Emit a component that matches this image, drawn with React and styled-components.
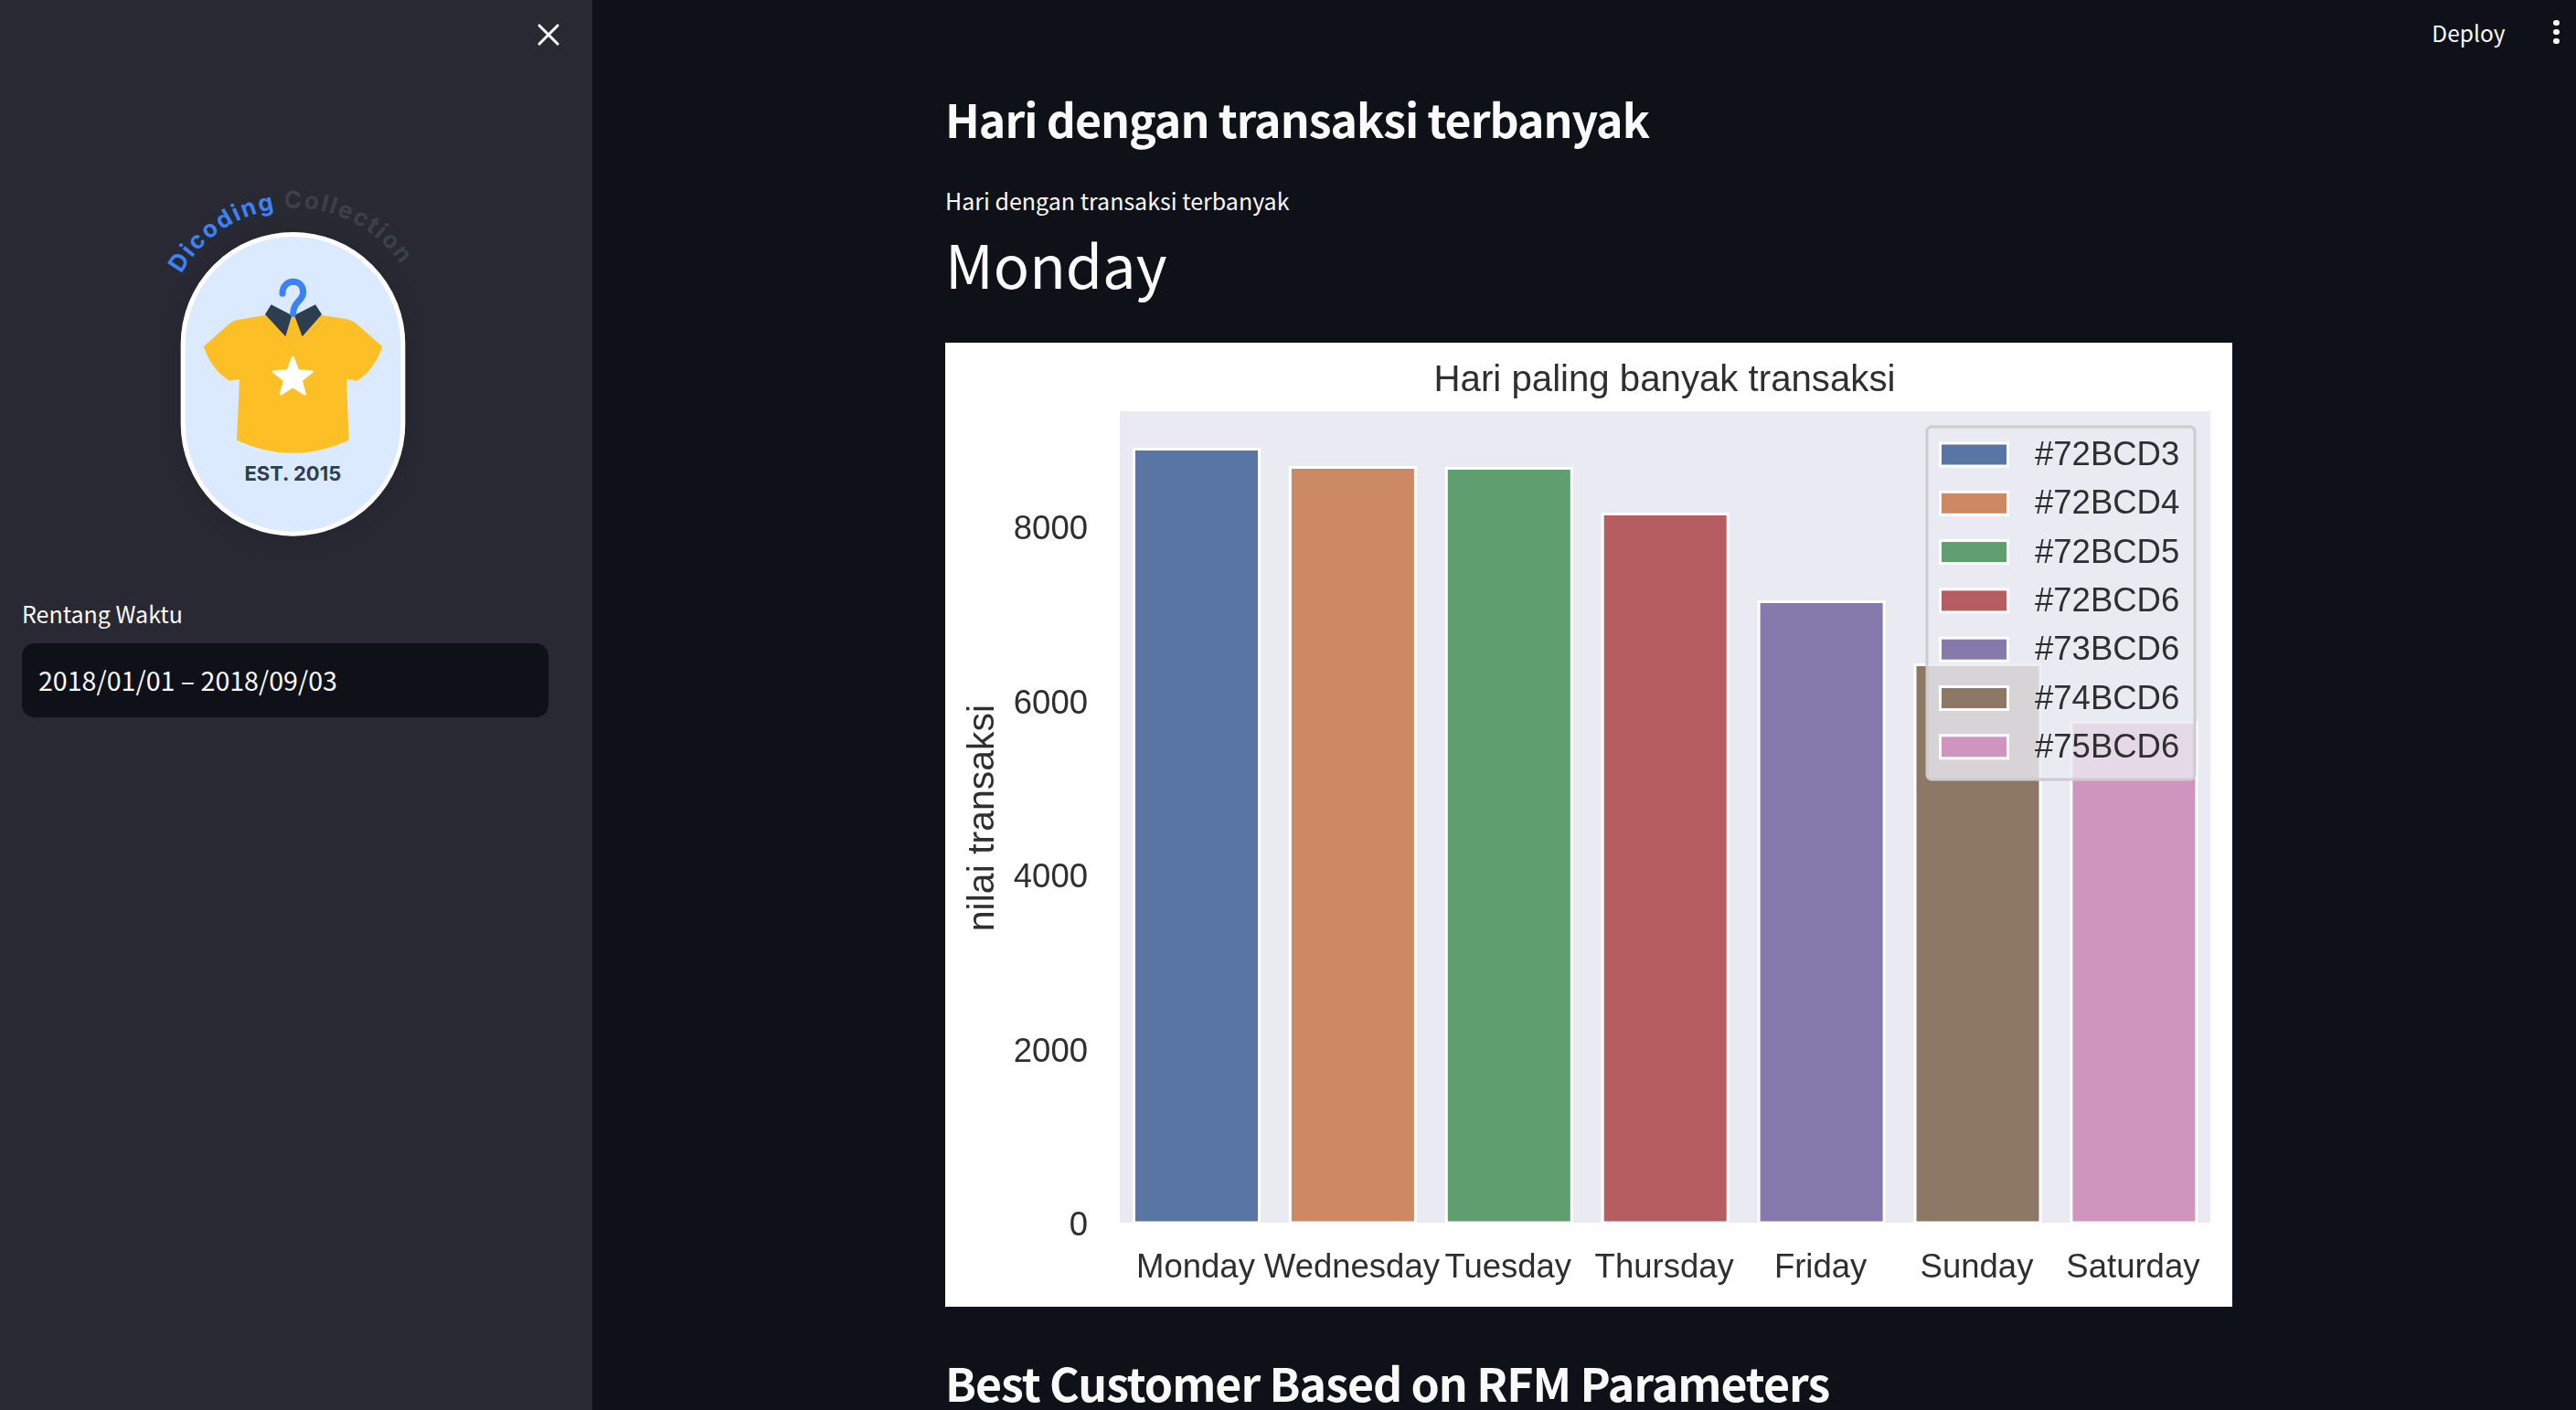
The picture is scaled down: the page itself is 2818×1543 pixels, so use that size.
import React from "react";
import styled, { createGlobalStyle } from "styled-components";
import { X } from "lucide-react";

const GlobalStyle = createGlobalStyle`
  html, body {
    margin: 0;
    height: 100%;
    overflow: hidden;
    background: #0e1117;
    font-family: "Noto Sans CJK SC", "Noto Sans", sans-serif;
    color: #fafafa;
  }
`;

const Page = styled.div`
  display: flex;
  height: 1543px;
  overflow: hidden;
`;

const Sidebar = styled.aside`
  flex: 0 0 648px;
  box-sizing: border-box;
  padding: 0 48px 0 24px;
  background: #282933;
`;

const CloseRow = styled.div`
  height: 76px;
  display: flex;
  align-items: center;
  justify-content: flex-end;
  margin-right: -20px;
`;

const LogoSvg = styled.svg`
  display: block;
  width: 350px;
  height: 440px;
  margin: 104px 0 0 126px;
`;

const Pill = styled.rect`
  fill: #dbeafe;
  stroke: #ffffff;
  stroke-width: 15;
  filter: drop-shadow(0 10px 30px rgba(0, 0, 0, 0.12));
`;

const FieldLabel = styled.div`
  margin-top: 33px;
  font-size: 25px;
  line-height: 36px;
`;

const DateInput = styled.div`
  margin-top: 15px;
  height: 81px;
  box-sizing: border-box;
  padding: 0 18px 3px;
  display: flex;
  align-items: center;
  border-radius: 14px;
  background: #0e1117;
  font-size: 28.6px;
`;

const Main = styled.main`
  flex: 1;
  min-width: 0;
  padding-left: 386px;
`;

const Toolbar = styled.div`
  height: 70px;
  margin-left: -386px;
  padding-right: 18px;
  display: flex;
  align-items: center;
  justify-content: flex-end;
  gap: 53px;
  font-size: 24.5px;
`;

const Dots = styled.div`
  display: flex;
  flex-direction: column;
  gap: 3.4px;

  span {
    width: 6.6px;
    height: 6.6px;
    border-radius: 50%;
    background: #fafafa;
  }
`;

const Heading = styled.h2`
  margin: ${({ $top }) => $top}px 0 0;
  font-size: 50px;
  letter-spacing: -1px;
  line-height: 62px;
  font-weight: 700;
  white-space: nowrap;
`;

const MetricLabel = styled.div`
  margin-top: 41px;
  font-size: 25px;
  line-height: 36px;
`;

const MetricValue = styled.div`
  margin-top: 11px;
  font-size: 65px;
  line-height: 80px;
`;

const Figure = styled.div`
  margin-top: 47px;
  width: 1408px;
  height: 1055px;
  background: #ffffff;
`;

const ChartSvg = styled.svg`
  display: block;
  width: 1408px;
  height: 1055px;
  filter: blur(0.4px);
`;

const ChartText = styled.text`
  font-family: "Liberation Sans", Arial, sans-serif;
  font-size: ${({ $size }) => $size || 36.5}px;
  fill: #2f2f2f;
  text-anchor: ${({ $anchor }) => $anchor || "start"};
`;

const Bar = styled.rect`
  stroke: #ffffff;
  stroke-width: 3;
`;

const bars = [
  { day: "Monday", top: 493, color: "#5975a4" },
  { day: "Wednesday", top: 513, color: "#cc8963" },
  { day: "Tuesday", top: 514, color: "#5f9e6e" },
  { day: "Thursday", top: 564, color: "#b55d60" },
  { day: "Friday", top: 660, color: "#857aab" },
  { day: "Sunday", top: 729, color: "#8d7866" },
  { day: "Saturday", top: 792, color: "#d095bf" },
];

const legend = ["#72BCD3", "#72BCD4", "#72BCD5", "#72BCD6", "#73BCD6", "#74BCD6", "#75BCD6"];
const yTicks = [8000, 6000, 4000, 2000, 0];

const ORIGIN_Y = 375;
const BASE_Y = 963;

const Chart = () => (
  <ChartSvg viewBox="0 0 1408 1055">
    <rect x="191" y="75" width="1193" height="888" fill="#eaeaf2" />
    <ChartText x="787" y="53" $size={40.2} $anchor="middle">Hari paling banyak transaksi</ChartText>
    {bars.map((b, i) => {
      const x = 208 + i * 170.9;
      const y = b.top - ORIGIN_Y;
      return (
        <g key={b.day}>
          <Bar x={x - 1.5} y={y - 1.5} width={137} height={BASE_Y - y + 1.5} fill={b.color} />
          <ChartText x={x + 66} y="1023" $anchor="middle">{b.day}</ChartText>
        </g>
      );
    })}
    {yTicks.map((t) => (
      <ChartText key={t} x="156" y={BASE_Y + 14 - (t / 1000) * 95.25} $anchor="end">{t}</ChartText>
    ))}
    <ChartText x="0" y="0" $size={41} $anchor="middle" transform="translate(53 520) rotate(-90)">nilai transaksi</ChartText>
    <rect x="1074" y="92" width="293" height="386" rx="5" fill="rgba(234,234,242,0.8)" stroke="#cccccc" strokeWidth="3" />
    {legend.map((label, i) => (
      <g key={label}>
        <Bar x={1088.5} y={110 + i * 53.3} width={74} height={25} fill={bars[i].color} />
        <ChartText x="1192" y={134 + i * 53.3}>{label}</ChartText>
      </g>
    ))}
  </ChartSvg>
);

const Logo = () => (
  <LogoSvg viewBox="0 0 1050 1320">
    <defs>
      <path id="logo-arc" d="M 145 360 A 424 424 0 0 1 885 360" />
    </defs>
    <text fontFamily="Inter, sans-serif" fontWeight="700" fontSize="78" letterSpacing="6.5">
      <textPath href="#logo-arc" startOffset="0">
        <tspan fill="#3b82f6">Dicoding</tspan>
        <tspan fill="#3d3f49"> Collection</tspan>
      </textPath>
    </text>
    <Pill x="150.5" y="229.5" width="722" height="983" rx="361" />
    <path
      d="M420 495 L330 510 Q315 513 300 525 L218 598 Q245 675 302 710 L336 704 L327 905 Q510 990 695 905 L687 704 L722 710 Q778 675 805 598 L722 525 Q708 513 690 508 L605 495 L512 495 Z"
      fill="#fdbf26"
    />
    <path d="M440 460 L508 495 L487 565 L420 492 Z M585 460 L516 495 L542 565 L606 492 Z" fill="#2c3e50" />
    <path
      d="M477 424 C477 397 495 385 512 385 C535 385 545 403 545 420 C545 447 512 450 512 490"
      fill="none"
      stroke="#3b82f6"
      strokeWidth="21"
      strokeLinecap="round"
    />
    <polygon
      points="511,634 527.5,677 574,680 537.6,708.7 550,753 511,728 472,753 484.4,708.7 448,680 494.5,677"
      fill="#fff"
      stroke="#fff"
      strokeWidth="9"
      strokeLinejoin="round"
    />
    <text x="511" y="1039" textAnchor="middle" fontFamily="Inter, sans-serif" fontWeight="700" fontSize="66" fill="#2c3e50">
      EST. 2015
    </text>
  </LogoSvg>
);

export default function App() {
  return (
    <>
      <GlobalStyle />
      <Page>
        <Sidebar>
          <CloseRow>
            <X size={40} strokeWidth={1.9} color="#fafafa" />
          </CloseRow>
          <Logo />
          <FieldLabel>Rentang Waktu</FieldLabel>
          <DateInput>2018/01/01 – 2018/09/03</DateInput>
        </Sidebar>
        <Main>
          <Toolbar>
            <span>Deploy</span>
            <Dots>
              <span />
              <span />
              <span />
            </Dots>
          </Toolbar>
          <Heading $top={28}>Hari dengan transaksi terbanyak</Heading>
          <MetricLabel>Hari dengan transaksi terbanyak</MetricLabel>
          <MetricValue>Monday</MetricValue>
          <Figure>
            <Chart />
          </Figure>
          <Heading $top={51}>Best Customer Based on RFM Parameters</Heading>
        </Main>
      </Page>
    </>
  );
}
